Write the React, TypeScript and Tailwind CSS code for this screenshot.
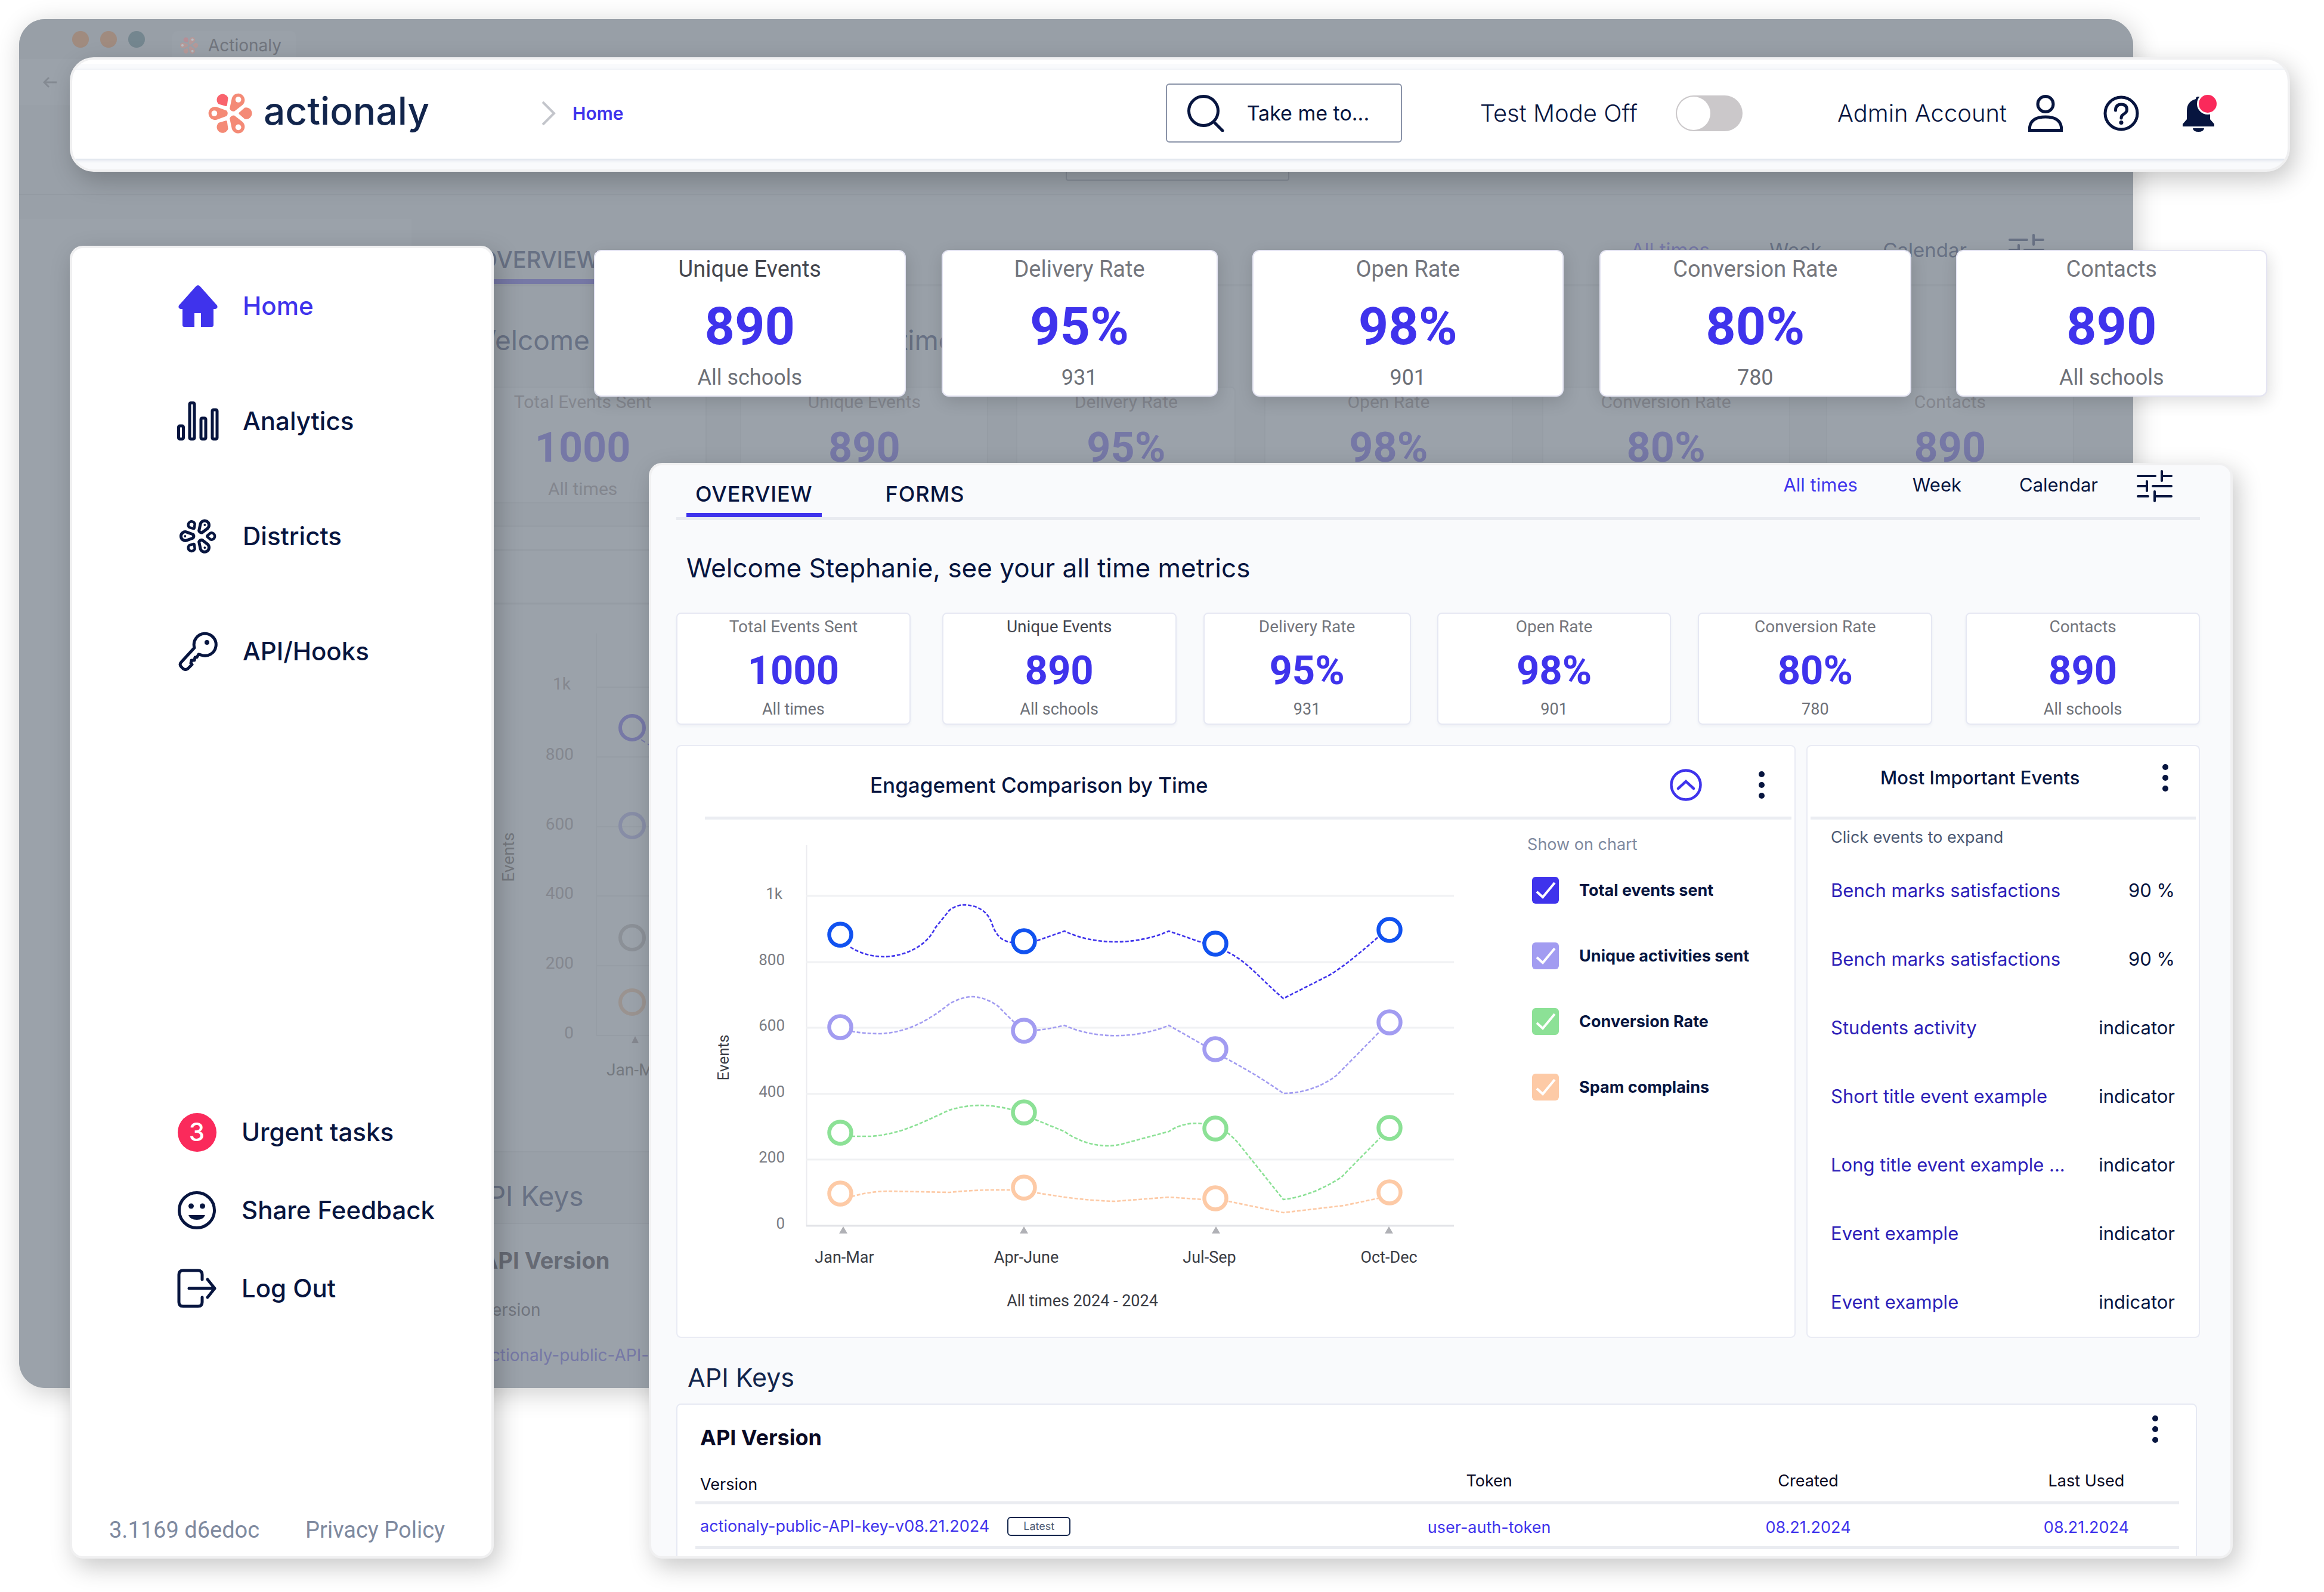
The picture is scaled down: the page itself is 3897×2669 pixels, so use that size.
// App.tsx
// Requires: React + Tailwind CSS

import React from "react";

// ─────────────────────────────────────────────
// DATA
// ─────────────────────────────────────────────
interface Metric {
  label: string;
  value: string;
  note: string;
  dark?: boolean;
}

const metrics: Metric[] = [
  { label: "Total Events Sent", value: "1000", note: "All times" },
  { label: "Unique Events", value: "890", note: "All schools", dark: true },
  { label: "Delivery Rate", value: "95%", note: "931" },
  { label: "Open Rate", value: "98%", note: "901" },
  { label: "Conversion Rate", value: "80%", note: "780" },
  { label: "Contacts", value: "890", note: "All schools" },
];

// column share and left gap of every card, one list per row of cards
const stripSizes = [
  "grow-[523]",
  "grow-[463] ml-[60px]",
  "grow-[523] ml-[58px]",
  "grow-[523] ml-[60px]",
  "grow-[523] ml-[75px]",
];
const rowSizes = [
  "grow-[393]",
  "grow-[393] ml-[53px]",
  "grow-[348] ml-[45px]",
  "grow-[393] ml-[44px]",
  "grow-[393] ml-[45px]",
  "grow-[393] ml-[56px]",
];
const backSizes = [
  "grow-[417]",
  "grow-[417] ml-[56px]",
  "grow-[368] ml-[47px]",
  "grow-[417] ml-[48px]",
  "grow-[417] ml-[49px]",
  "grow-[417] ml-[60px]",
];

const events = [
  { title: "Bench marks satisfactions", result: "90 %" },
  { title: "Bench marks satisfactions", result: "90 %" },
  { title: "Students activity", result: "indicator" },
  { title: "Short title event example", result: "indicator" },
  { title: "Long title event example ...", result: "indicator" },
  { title: "Event example", result: "indicator" },
  { title: "Event example", result: "indicator" },
];

const series = [
  {
    id: "total",
    name: "Total events sent",
    box: "bg-[#3f33ec]",
    ring: "#1152f0",
    line: "#3f33ec",
    points: [1567, 1578, 1582, 1559],
    path: "M1426 1588C1445 1600 1465 1604 1484 1604C1515 1603 1553 1588 1568 1556L1592 1526C1600 1520 1608 1517 1618 1517C1640 1518 1655 1528 1662 1545C1668 1563 1676 1578 1697 1580M1739 1577L1785 1561C1835 1585 1905 1585 1960 1561L2018 1581M2058 1596C2092 1612 2112 1640 2152 1674L2225 1637Q2252 1623 2312 1570",
  },
  {
    id: "unique",
    name: "Unique activities sent",
    box: "bg-[#a29cf1]",
    ring: "#a29cf1",
    line: "#a29cf1",
    points: [1722, 1728, 1759, 1714],
    path: "M1428 1729Q1450 1733 1477 1733C1520 1731 1556 1712 1592 1683C1606 1675 1618 1671 1632 1671C1650 1672 1664 1680 1674 1687Q1686 1700 1701 1714M1739 1727Q1760 1725 1785 1719C1835 1742 1905 1742 1960 1719L2018 1752M2053 1773Q2105 1800 2152 1833C2190 1833 2222 1818 2241 1803Q2262 1782 2312 1731",
  },
  {
    id: "conversion",
    name: "Conversion Rate",
    box: "bg-[#8ce196]",
    ring: "#8ce196",
    line: "#8ce196",
    points: [1899, 1865, 1892, 1891],
    path: "M1428 1905H1460C1510 1902 1550 1880 1592 1861C1625 1851 1660 1850 1698 1861M1736 1877L1785 1897C1820 1922 1860 1925 1885 1917L1960 1897Q1985 1880 2018 1884M2058 1899Q2070 1908 2080 1921L2152 2011C2195 2006 2230 1986 2250 1973Q2270 1952 2314 1908",
  },
  {
    id: "spam",
    name: "Spam complains",
    box: "bg-[#fdcaa6]",
    ring: "#fdcaa6",
    line: "#fdcaa6",
    points: [2001, 1991, 2009, 1999],
    path: "M1428 2006Q1460 1997 1491 1997L1592 1999Q1640 1994 1698 1995M1739 2000L1785 2007Q1830 2013 1870 2014L1960 2007L2018 2011M2060 2014L2152 2033L2254 2021L2311 2009",
  },
];

const ringX = [1409, 1717, 2038, 2330];
const tickX = [1414, 1717, 2039, 2329];
const quarters = [
  { name: "Jan-Mar", x: 1416 },
  { name: "Apr-June", x: 1721 },
  { name: "Jul-Sep", x: 2028 },
  { name: "Oct-Dec", x: 2329 },
];
const grid = [
  { name: "1k", y: 1502 },
  { name: "800", y: 1613 },
  { name: "600", y: 1723 },
  { name: "400", y: 1834 },
  { name: "200", y: 1944 },
  { name: "0", y: 2055 },
];

// ─────────────────────────────────────────────
// ICONS
// ─────────────────────────────────────────────
const BIG = "M10 -33L62 -14Q72 0 62 14L10 33A34 34 0 1 1 10 -33Z";
const SMALL = "M9 -29L38 -4Q42 0 38 4L9 29A30 30 0 1 1 9 -29Z";

function Flower({ className }: { className: string }) {
  return (
    <svg className={className} viewBox="22 42 236 222" fill="#f48a76" aria-hidden="true">
      <path d={BIG} transform="translate(60 153)" />
      <path d={BIG} transform="translate(182 83) rotate(122)" />
      <path d={BIG} transform="translate(182 224) rotate(-122)" />
      <path d={SMALL} transform="translate(100 82) rotate(57)" fill="#f9636d" />
      <path d={SMALL} transform="translate(100 225) rotate(-57)" />
      <path d={SMALL} transform="translate(224 153) rotate(180)" />
      <g fill="#fff">
        <circle cx="58" cy="153" r="15" />
        <circle cx="182" cy="82" r="15" />
        <circle cx="182" cy="225" r="15" />
      </g>
    </svg>
  );
}

function FlowerOutline({ className }: { className: string }) {
  return (
    <svg className={className} viewBox="18 38 244 230" fill="none" stroke="#07153f" strokeWidth="23" strokeLinejoin="round" aria-hidden="true">
      <path d={BIG} transform="translate(60 153) scale(.8)" />
      <path d={BIG} transform="translate(182 83) rotate(122) scale(.8)" />
      <path d={BIG} transform="translate(182 224) rotate(-122) scale(.8)" />
      <path d={SMALL} transform="translate(100 82) rotate(57) scale(.7)" />
      <path d={SMALL} transform="translate(100 225) rotate(-57) scale(.7)" />
      <path d={SMALL} transform="translate(224 153) rotate(180) scale(.7)" />
      <g fill="#07153f" stroke="none">
        <circle cx="60" cy="153" r="7" />
        <circle cx="182" cy="83" r="7" />
        <circle cx="182" cy="224" r="7" />
      </g>
    </svg>
  );
}

function HomeIcon() {
  return (
    <svg className="w-[66px] h-[70px]" viewBox="0 0 66 70" fill="#3f33ec" aria-hidden="true">
      <path d="M30 1.500Q33 -1 36 1.500L65 34Q67 39 62 40H59V67Q59 70 56 70H38V47H27V70H10Q7 70 7 67V40H4Q-1 39 1 34Z" />
    </svg>
  );
}

function BarsIcon() {
  return (
    <svg className="w-[70px] h-[66px]" viewBox="0 0 70 66" fill="none" stroke="#07153f" strokeWidth="5" aria-hidden="true">
      <rect x="2.500" y="41" width="8" height="22" rx="2" />
      <rect x="21" y="2.500" width="8" height="60.500" rx="2" />
      <rect x="40" y="28" width="8" height="35" rx="2" />
      <rect x="59" y="14" width="8" height="49" rx="2" />
    </svg>
  );
}

function KeyIcon() {
  return (
    <svg className="w-[66px] h-[66px]" viewBox="0 0 66 66" fill="none" stroke="#07153f" strokeWidth="5" strokeLinecap="round" strokeLinejoin="round" aria-hidden="true">
      <path d="M27 27A18.500 18.500 0 1 1 38 39L34 38L31 43H28L27 48H22L21 53L23 55L16 62Q12 65 8 62L5 59Q1 55 5 51Z" />
      <circle cx="48" cy="18" r="4" fill="#07153f" stroke="none" />
    </svg>
  );
}

function SmileIcon() {
  return (
    <svg className="w-[66px] h-[66px]" viewBox="0 0 66 66" fill="none" stroke="#07153f" strokeWidth="5" aria-hidden="true">
      <circle cx="33" cy="33" r="29.500" />
      <g fill="#07153f" stroke="none">
        <circle cx="23.500" cy="26" r="4.500" />
        <circle cx="42.500" cy="26" r="4.500" />
        <path d="M19 41H47Q44 49 33 49T19 41Z" />
      </g>
    </svg>
  );
}

function LogOutIcon() {
  return (
    <svg className="w-[66px] h-[66px]" viewBox="0 0 66 66" fill="none" stroke="#07153f" strokeWidth="5" strokeLinecap="round" strokeLinejoin="round" aria-hidden="true">
      <path d="M42 18V10Q42 3 35 3H10Q3 3 3 10V56Q3 63 10 63H35Q42 63 42 56V48M20 33H63M51 18L63 33L51 48" />
    </svg>
  );
}

function TuneIcon({ color }: { color: string }) {
  return (
    <svg className="w-[60px] h-[54px]" viewBox="0 0 60 54" fill="none" stroke={color} strokeWidth="4" strokeLinecap="round" aria-hidden="true">
      <path d="M2 10H31M42 2V18M42 10H58M2 27H17M17 19V35M27 27H58M2 44H19M30 36V52M30 44H58" />
    </svg>
  );
}

function Kebab({ label }: { label: string }) {
  return (
    <button type="button" aria-label={label} className="flex w-6 flex-col items-center gap-2">
      <span className="size-[10px] rounded-full bg-[#07153f]" />
      <span className="size-[10px] rounded-full bg-[#07153f]" />
      <span className="size-[10px] rounded-full bg-[#07153f]" />
    </button>
  );
}

// ─────────────────────────────────────────────
// DIMMED WINDOW BEHIND EVERYTHING
// ─────────────────────────────────────────────
function BackWindow() {
  return (
    <div
      aria-hidden="true"
      className="absolute top-8 left-8 right-80 h-[2295px] flex flex-col overflow-hidden rounded-[44px] bg-[#99a0a8] text-[#687184] shadow-[4px_8px_44px_rgba(0,0,0,0.2)]"
    >
      <div className="flex h-[67px] shrink-0 items-center bg-[#989fa7] pl-[89px]">
        <div className="flex gap-[19px]">
          <span className="size-7 rounded-full bg-[#a08b7f]" />
          <span className="size-7 rounded-full bg-[#a08b7f]" />
          <span className="size-7 rounded-full bg-[#74868f]" />
        </div>
        <div className="mt-5 ml-[46px] flex h-[47px] items-center gap-4 rounded-t-lg bg-[#9aa1a9] pl-3 pr-6">
          <Flower className="h-[30px] w-8 opacity-30" />
          <span className="text-[28px] leading-8 text-[#71757e]">Actionaly</span>
        </div>
      </div>
      <div className="flex h-[77px] shrink-0 items-center bg-[#9ba2aa] pl-[40px]">
        <svg className="w-6 h-5" viewBox="0 0 24 20" fill="none" stroke="#848a92" strokeWidth="3">
          <path d="M23 10H3M10 2L2 10L10 18" />
        </svg>
      </div>
      <div className="flex h-[151px] shrink-0 justify-center border-b-2 border-[#949ba3] pt-8 pl-[340px]">
        <div className="h-[95px] w-[375px] rounded border-2 border-[#868d98]" />
      </div>

      <div className="flex flex-1">
        <div className="mt-10 w-[658px] shrink-0 bg-[#9ba2aa]" />
        <div className="mr-[99px] ml-[79px] flex flex-1 flex-col">
          <div className="flex h-[153px] items-end justify-between border-b-4 border-[#959ca4]">
            <span className="ml-5 border-b-8 border-[#7678a6] px-4 pb-[10px] text-[38px] leading-[46px] font-medium">OVERVIEW</span>
            <div className="flex items-center pb-[30px] pr-[50px] text-[33px] leading-10">
              <span className="mr-[100px] text-[#7678a6]">All times</span>
              <span className="mr-[103px]">Week</span>
              <span className="mr-[70px]">Calendar</span>
              <TuneIcon color="#687184" />
            </div>
          </div>
          <p className="mt-[60px] ml-[18px] text-[46px] leading-[60px]">Welcome Stephanie, see your all time metrics</p>
          <div className="mt-[48px] flex font-['Roboto',sans-serif]">
            {metrics.map((m, i) => (
              <div key={i} className={`${backSizes[i]} h-[196px] basis-0 rounded-lg border-2 border-[#969da5] bg-[#9ba2aa] text-center text-[#83868e]`}>
                <p className="mt-1 text-[30px] leading-10">{m.label}</p>
                <p className="mt-4 text-[70px] leading-20 font-bold text-[#7678a6]">{m.value}</p>
                <p className="mt-[10px] text-[30px] leading-10">{m.note}</p>
              </div>
            ))}
          </div>
          <div className="mt-[37px] h-[1051px] border-y-2 border-[#959ca4] bg-[#9ba2aa]">
            <svg className="h-[1051px] w-[720px]" viewBox="769 883 720 1051" fill="none">
              <path d="M769 922H1493M769 1012H1493" stroke="#959ca4" strokeWidth="3" />
              <path d="M1000 1062V1737M1000 1152H1493M1000 1269H1493M1000 1386H1493M1000 1502H1493M1000 1619H1493M1000 1736H1493" stroke="#969da5" strokeWidth="2" />
              <g fill="#84878f" fontFamily="Roboto" fontSize="28" textAnchor="end">
                <text x="957" y="1156">1k</text>
                <text x="962" y="1274">800</text>
                <text x="962" y="1391">600</text>
                <text x="962" y="1507">400</text>
                <text x="962" y="1624">200</text>
                <text x="962" y="1741">0</text>
              </g>
              <text fill="#75797f" fontFamily="Roboto" fontSize="28" textAnchor="middle" transform="translate(862 1437) rotate(-90)">Events</text>
              <text x="1017" y="1803" fill="#75797f" fontFamily="Roboto" fontSize="28">Jan-Mar</text>
              <path d="M1065 1737L1071 1749H1059Z" fill="#84878f" />
              <g strokeWidth="6">
                <path d="M1075 1240L1100 1256" stroke="#7678a6" strokeWidth="2" strokeDasharray="8 5" />
                <circle cx="1060" cy="1220" r="20" stroke="#7678a6" />
                <circle cx="1060" cy="1384" r="20" stroke="#878da6" />
                <circle cx="1060" cy="1572" r="20" stroke="#8b9097" />
                <circle cx="1060" cy="1680" r="20" stroke="#9a9390" />
              </g>
            </svg>
          </div>
          <p className="ml-[18px] mt-[43px] text-[46px] leading-[60px]">API Keys</p>
          <div className="mt-[15px] flex-1 border-t-2 border-[#959ca4] bg-[#9ba2aa] pl-[38px]">
            <p className="mt-9 text-[38px] leading-[50px] font-bold text-[#666a74]">API Version</p>
            <p className="mt-[38px] text-[28px] leading-10 text-[#71757e]">Version</p>
            <p className="mt-[36px] text-[28px] leading-10 text-[#7678a6]">actionaly-public-API-key-v08.21.2024</p>
          </div>
        </div>
      </div>
    </div>
  );
}

// ─────────────────────────────────────────────
// TOP BAR
// ─────────────────────────────────────────────
function TopBar() {
  return (
    <header className="relative z-10 mr-[57px] ml-[117px] flex flex-col overflow-hidden rounded-[40px] border-4 border-[#f0f0f1] bg-[#f9fafc] shadow-[8px_14px_40px_rgba(0,0,0,0.22)]">
      <div className="h-[7px] bg-white" />
      <div className="mt-[10px] mb-[18px] flex h-[149px] items-center bg-white pr-[117px] pb-1 pl-[226px] text-[#07153f] shadow-[0_2px_6px_#d5dae5]">
        <a href="#home" className="flex items-center gap-[17px]">
          <Flower className="h-[72px] w-[78px]" />
          <span className="-mt-2 text-[64px] leading-[72px] font-medium text-[#12254c]">actionaly</span>
        </a>
        <nav aria-label="Breadcrumb" className="ml-[188px] flex items-center gap-[28px]">
          <svg className="h-10 w-6" viewBox="0 0 24 40" fill="none" stroke="#c3c5cb" strokeWidth="4" aria-hidden="true">
            <path d="M2 1L21 20L2 39" />
          </svg>
          <a href="#home" className="text-[30px] leading-10 font-semibold text-[#3f33ec]">Home</a>
        </nav>
        <label className="ml-auto flex h-[99px] w-[396px] items-center gap-[38px] rounded-md border-2 border-[#8a93a8] pl-[34px]">
          <svg className="size-[62px] shrink-0" viewBox="0 0 62 62" fill="none" stroke="#07153f" strokeWidth="5" aria-hidden="true">
            <circle cx="27" cy="27" r="24.500" />
            <path d="M44 45L59 60" strokeLinecap="round" />
          </svg>
          <input type="search" aria-label="Take me to" placeholder="Take me to..." className="w-[240px] min-w-0 text-[34px] leading-10 outline-none placeholder:text-[#07153f] placeholder:opacity-100" />
        </label>
        <label className="ml-[131px] flex items-center gap-[64px] text-[40px] leading-12 font-light">
          Test Mode Off
          <input
            type="checkbox"
            role="switch"
            className="h-[60px] w-[112px] appearance-none rounded-full bg-[#cbc8ca] p-[2px] before:block before:size-[56px] before:rounded-full before:bg-white"
          />
        </label>
        <button type="button" className="ml-[159px] flex items-center gap-9 text-[40px] leading-12 font-light">
          Admin Account
          <svg className="h-[62px] w-[58px]" viewBox="0 0 58 62" fill="none" stroke="#07153f" strokeWidth="5" aria-hidden="true">
            <circle cx="29" cy="15.500" r="13" />
            <path d="M2.500 59.500V54Q5 37 29 37T55.500 54V59.500Z" />
          </svg>
        </button>
        <button type="button" aria-label="Help" className="ml-[68px]">
          <svg className="size-[60px]" viewBox="0 0 60 60" fill="none" stroke="#07153f" strokeWidth="5" aria-hidden="true">
            <circle cx="30" cy="30" r="27" />
            <path d="M20.500 25Q20.500 15 30 15T39.500 24Q39.500 28 34 31.500Q30 34 30 38" strokeLinecap="round" />
            <circle cx="30" cy="45.500" r="3.500" fill="#07153f" stroke="none" />
          </svg>
        </button>
        <button type="button" aria-label="Notifications" className="ml-[72px]">
          <svg className="h-[64px] w-[60px]" viewBox="0 0 60 64" fill="#07153f" aria-hidden="true">
            <path d="M23 8Q23 4 27 4T32 8Q47 12 47 28V42L54 50V54H1V50L8 42V28Q8 12 23 8ZM18 57H37Q36 63 27.500 63T18 57Z" />
            <circle cx="43" cy="16" r="18" fill="#fff" />
            <circle cx="43" cy="16" r="15" fill="#fa2a5b" />
          </svg>
        </button>
      </div>
    </header>
  );
}

// ─────────────────────────────────────────────
// SIDEBAR
// ─────────────────────────────────────────────
function NavItem({ icon, text, active }: { icon: React.ReactNode; text: string; active?: boolean }) {
  return (
    <a
      href="#nav"
      className={`flex h-[66px] items-center gap-10 text-[42px] leading-12 font-medium ${active ? "text-[#3f33ec]" : "text-[#07153f]"}`}
    >
      <span className="flex w-[70px] justify-center">{icon}</span>
      {text}
    </a>
  );
}

function Sidebar() {
  return (
    <aside className="flex w-[711px] shrink-0 flex-col rounded-[22px] border-4 border-[#f0f0f1] bg-white pt-[64px] pb-[20px] shadow-[8px_14px_40px_rgba(0,0,0,0.22)]">
      <nav className="flex flex-col gap-[127px] pl-[176px]">
        <NavItem icon={<HomeIcon />} text="Home" active />
        <NavItem icon={<BarsIcon />} text="Analytics" />
        <NavItem icon={<FlowerOutline className="size-[66px]" />} text="Districts" />
        <NavItem icon={<KeyIcon />} text="API/Hooks" />
      </nav>
      <nav className="mt-[740px] flex flex-col gap-[65px] pl-[174px]">
        <NavItem
          icon={<span className="flex size-[65px] items-center justify-center rounded-full bg-[#fa2a5b] text-[42px] text-white">3</span>}
          text="Urgent tasks"
        />
        <NavItem icon={<SmileIcon />} text="Share Feedback" />
        <NavItem icon={<LogOutIcon />} text="Log Out" />
      </nav>
      <div className="mt-auto flex justify-between pr-[78px] pl-[62px] font-['Roboto',sans-serif] text-[38px] leading-12 text-[#7f8a9f]">
        <span>3.1169 d6edoc</span>
        <a href="#privacy">Privacy Policy</a>
      </div>
    </aside>
  );
}

// ─────────────────────────────────────────────
// METRIC CARDS
// ─────────────────────────────────────────────
function MetricStrip() {
  return (
    <section className="mr-[95px] ml-[168px] flex font-['Roboto',sans-serif]">
      {metrics.slice(1).map((m, i) => (
        <article
          key={i}
          className={`${stripSizes[i]} h-[246px] basis-0 rounded-xl border-2 border-[#e4e4f2] bg-white text-center shadow-[2px_8px_28px_rgba(0,0,0,0.14)]`}
        >
          <p className={`mt-2 text-[38px] leading-11 ${m.dark ? "text-[#44464e]" : "text-[#74767d]"}`}>{m.label}</p>
          <p className="mt-[22px] text-[88px] leading-[104px] font-bold text-[#3f33ec]">{m.value}</p>
          <p className="mt-3 text-[36px] leading-11 text-[#6d7077]">{m.note}</p>
        </article>
      ))}
    </section>
  );
}

function MetricRow() {
  return (
    <section className="mt-[48px] flex font-['Roboto',sans-serif]">
      {metrics.map((m, i) => (
        <article
          key={i}
          className={`${rowSizes[i]} h-[188px] basis-0 rounded-lg border-2 border-[#e6e8f3] bg-white text-center shadow-[0_3px_4px_#eff1f6]`}
        >
          <p className={`mt-[6px] text-[28px] leading-8 ${m.dark ? "text-[#44464e]" : "text-[#74767d]"}`}>{m.label}</p>
          <p className="mt-[17px] text-[67px] leading-[80px] font-bold text-[#3f33ec]">{m.value}</p>
          <p className="mt-[9px] text-[27px] leading-8 text-[#6d7077]">{m.note}</p>
        </article>
      ))}
    </section>
  );
}

// ─────────────────────────────────────────────
// ENGAGEMENT CHART
// ─────────────────────────────────────────────
function Chart() {
  return (
    <svg className="w-[1270px] h-[830px]" viewBox="1182 1400 1270 830" fill="none" role="img" aria-label="Events per quarter">
      <path d="M1352.500 1417V2055" stroke="#ececf0" strokeWidth="2" />
      {grid.map((g) => (
        <g key={g.name}>
          <path d={`M1352 ${g.y}H2438`} stroke={g.name === "0" ? "#e2e3e7" : "#f0f1f3"} strokeWidth="3" />
          <text x={g.name === "1k" ? 1312 : 1316} y={g.y + 5} textAnchor="end" fill="#7a7c83" fontFamily="Roboto" fontSize="26">
            {g.name}
          </text>
        </g>
      ))}
      <text transform="translate(1222 1773) rotate(-90)" textAnchor="middle" fill="#3a3c44" fontFamily="Roboto" fontSize="26">
        Events
      </text>
      {tickX.map((x) => (
        <path key={x} d={`M${x} 2056L${x + 7} 2068H${x - 7}Z`} fill="#b0b1b6" />
      ))}
      {quarters.map((q) => (
        <text key={q.name} x={q.x} y="2117" textAnchor="middle" fill="#3a3c44" fontFamily="Roboto" fontSize="27">
          {q.name}
        </text>
      ))}
      <text x="1815" y="2190" textAnchor="middle" fill="#3a3c44" fontFamily="Roboto" fontSize="27">
        All times 2024 - 2024
      </text>
      {series.map((s) => (
        <g key={s.id}>
          <path d={s.path} stroke={s.line} strokeWidth="2.600" strokeDasharray="6 3" />
          {s.points.map((y, i) => (
            <circle key={i} cx={ringX[i]} cy={y} r="18.500" fill="#fff" stroke={s.ring} strokeWidth="6.500" />
          ))}
        </g>
      ))}
    </svg>
  );
}

function ChartCard() {
  return (
    <section className="grow-[1879] basis-0 rounded-lg border-2 border-[#e9ebf4] bg-white pb-[11px]">
      <div className="ml-[46px] mr-[5px] flex h-[123px] items-center border-b-[5px] border-[#ebedf2] pt-3 pr-[38px] pl-[277px]">
        <h2 className="mr-auto text-[35px] leading-11 font-medium text-[#07153f]">Engagement Comparison by Time</h2>
        <button type="button" aria-label="Collapse" className="mr-[88px]">
          <svg className="size-[54px]" viewBox="0 0 54 54" fill="none" stroke="#3f33ec" strokeWidth="4.500" aria-hidden="true">
            <circle cx="27" cy="27" r="24.500" />
            <path d="M14 33L27 21L40 33" strokeLinecap="round" />
          </svg>
        </button>
        <Kebab label="Chart menu" />
      </div>
      <div className="mt-[26px] flex justify-between pl-[46px]">
        <Chart />
        <fieldset className="w-[448px]">
          <legend className="text-[27px] leading-8 text-[#7f8a9f]">Show on chart</legend>
          <div className="mt-[38px] ml-2 flex flex-col gap-[65px]">
            {series.map((s) => (
              <div key={s.id} className="flex items-center gap-[34px]">
                <span className="grid size-[45px] shrink-0">
                  <input id={s.id} type="checkbox" defaultChecked className={`col-start-1 row-start-1 size-[45px] appearance-none rounded-md ${s.box}`} />
                  <svg className="pointer-events-none col-start-1 row-start-1 size-[45px]" viewBox="0 0 45 45" fill="none" stroke="#fff" strokeWidth="4" aria-hidden="true">
                    <path d="M8 25L18 34L38 10" />
                  </svg>
                </span>
                <label htmlFor={s.id} className="text-[27px] leading-8 font-bold text-[#07153f]">{s.name}</label>
              </div>
            ))}
          </div>
        </fieldset>
      </div>
    </section>
  );
}

function EventsCard() {
  return (
    <section className="grow-[658] basis-0 rounded-lg border-2 border-[#e9ebf4] bg-white">
      <div className="mx-[5px] flex h-[123px] items-center justify-between border-b-[5px] border-[#ebedf2] pr-[39px] pb-3 pl-[117px]">
        <h2 className="text-[31px] leading-10 font-medium text-[#07153f]">Most Important Events</h2>
        <Kebab label="Events menu" />
      </div>
      <p className="mt-[14px] pl-[39px] text-[27px] leading-8 text-[#4b5872]">Click events to expand</p>
      <ul className="mt-[53px] flex flex-col gap-[75px] pr-[40px] pl-[39px] text-[31px] leading-10">
        {events.map((e, i) => (
          <li key={i} className="flex justify-between">
            <a href="#event" className="text-[#2c20b8]">{e.title}</a>
            <span className="text-[#07153f]">{e.result}</span>
          </li>
        ))}
      </ul>
    </section>
  );
}

// ─────────────────────────────────────────────
// API KEYS
// ─────────────────────────────────────────────
function ApiKeys() {
  return (
    <>
      <h2 className="mt-[39px] ml-[19px] text-[43px] leading-[54px] text-[#12254c]">API Keys</h2>
      <section className="mt-[17px] mr-[5px] rounded-t-lg border-2 border-b-0 border-[#e6e9f3] bg-white pr-[28px] pl-[30px]">
        <div className="flex h-[104px] justify-between pt-[18px] pr-[28px] pl-2">
          <h3 className="mt-[15px] text-[36px] leading-11 font-bold text-[#0a0a24]">API Version</h3>
          <Kebab label="API keys menu" />
        </div>
        <table className="w-full table-fixed text-[27px] leading-8">
          <colgroup>
            <col />
            <col className="w-[23%]" />
            <col className="w-[20%]" />
            <col className="w-[15%]" />
          </colgroup>
          <thead>
            <tr className="h-[60px] border-b-[5px] border-[#eaecf1] align-top text-[#0a0a24]">
              <th className="pt-[14px] pl-2 text-left font-normal">Version</th>
              <th className="pt-2 font-normal">Token</th>
              <th className="pt-2 font-normal">Created</th>
              <th className="pt-2 pl-[62px] font-normal">Last Used</th>
            </tr>
          </thead>
          <tbody>
            <tr className="h-[75px] border-b-[5px] border-[#eaecf1] text-center text-[#3f33ec]">
              <td className="pt-1 pl-2">
                <div className="flex items-center gap-[30px]">
                  <a href="#key">actionaly-public-API-key-v08.21.2024</a>
                  <span className="rounded-md border-2 border-[#12254c] px-[25px] text-[18px] leading-7 text-[#4b5872]">Latest</span>
                </div>
              </td>
              <td className="pt-2">user-auth-token</td>
              <td className="pt-2">08.21.2024</td>
              <td className="pt-2 pl-[62px]">08.21.2024</td>
            </tr>
          </tbody>
        </table>
        <div className="h-[12px]" />
      </section>
    </>
  );
}

// ─────────────────────────────────────────────
// DASHBOARD PANEL
// ─────────────────────────────────────────────
function Dashboard() {
  return (
    <main className="mt-[111px] mr-[153px] ml-[260px] overflow-hidden rounded-[22px] border-4 border-[#f0f0f1] bg-[#f9fafc] pr-[51px] pl-[42px] shadow-[8px_14px_40px_rgba(0,0,0,0.22)]">
      <div className="flex h-[92px] items-end justify-between border-b-[5px] border-[#e9ebf0] pl-[17px]">
        <div className="flex text-[36px] leading-11 font-medium text-[#07153f]">
          <button type="button" className="border-b-[7px] border-[#3f33ec] px-[15px] pb-[10px] tracking-wide">OVERVIEW</button>
          <button type="button" className="ml-[92px] border-b-[7px] border-transparent px-[15px] pb-[10px] tracking-wide">FORMS</button>
        </div>
        <div className="flex items-center pr-[46px] pb-[25px] text-[31px] leading-10 text-[#07153f]">
          <button type="button" className="mr-[92px] pb-1 text-[#3f33ec]">All times</button>
          <button type="button" className="mr-[97px] pb-1">Week</button>
          <button type="button" className="mr-[65px] pb-1">Calendar</button>
          <button type="button" aria-label="Filters">
            <TuneIcon color="#07153f" />
          </button>
        </div>
      </div>
      <h1 className="mt-[53px] ml-[17px] text-[44px] leading-[54px] text-[#07153f]">Welcome Stephanie, see your all time metrics</h1>
      <MetricRow />
      <div className="mt-[34px] flex gap-[18px]">
        <ChartCard />
        <EventsCard />
      </div>
      <ApiKeys />
    </main>
  );
}

export default function App() {
  return (
    <div className="relative min-h-screen w-full bg-white pt-24 pb-[57px] font-['Inter',sans-serif]">
      <BackWindow />
      <TopBar />
      <div className="relative mt-[124px] flex pl-[117px]">
        <Sidebar />
        <div className="flex min-w-0 flex-1 flex-col pt-[7px]">
          <MetricStrip />
          <Dashboard />
        </div>
      </div>
    </div>
  );
}
